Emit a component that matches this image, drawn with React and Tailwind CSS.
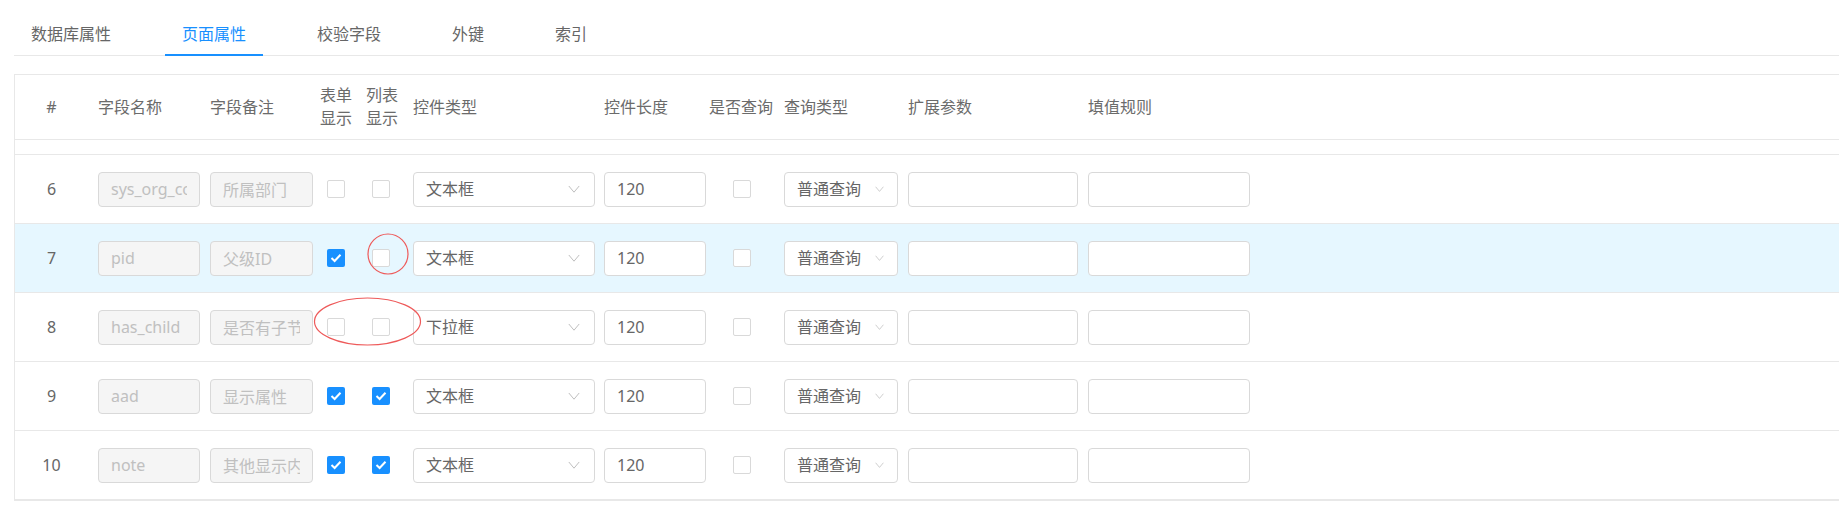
import React from 'react';

const tabs = ['数据库属性', '页面属性', '校验字段', '外键', '索引'];

const rows = [
  { no: 6,  name: 'sys_org_code', remark: '所属部门',     form: false, list: false, type: '文本框' },
  { no: 7,  name: 'pid',          remark: '父级ID',       form: true,  list: false, type: '文本框', hover: true },
  { no: 8,  name: 'has_child',    remark: '是否有子节点', form: false, list: false, type: '下拉框' },
  { no: 9,  name: 'aad',          remark: '显示属性',     form: true,  list: true,  type: '文本框' },
  { no: 10, name: 'note',         remark: '其他显示内容', form: true,  list: true,  type: '文本框' },
];

const cols = 'grid grid-cols-[83px_112px_110px_46px_47px_191px_105px_75px_124px_180px_1fr]';

const Checkbox = ({ checked, className = '' }) => (
  checked ? (
    <span className={`flex h-[18px] w-[18px] items-center justify-center rounded-[2px] bg-[#1890ff] ${className}`}>
      <svg width="12" height="10" viewBox="0 0 12 10" fill="none">
        <path d="M1.5 5 L4.6 8 L10.5 1.8" stroke="#fff" strokeWidth="2" />
      </svg>
    </span>
  ) : (
    <span className={`block h-[18px] w-[18px] rounded-[2px] border border-[#d9d9d9] bg-white ${className}`} />
  )
);

const Chevron = ({ size = 12 }) => (
  <svg width={size} height={size * 0.7} viewBox="0 0 12 8" fill="none">
    <path d="M0.8 0.8 L6 7 L11.2 0.8" stroke="#bfbfbf" strokeWidth="1" />
  </svg>
);

const TextInput = ({ value = '', disabled, width }) => (
  <input
    readOnly
    value={value}
    className={`h-[35px] ${width} rounded-[4px] border border-[#d9d9d9] px-[12px] text-[16px] outline-none ${
      disabled ? 'bg-[#f5f5f5] text-[#c0c0c0]' : 'bg-white text-[#666666]'
    }`}
  />
);

const Select = ({ value, width, pr, chevron }) => (
  <div className={`flex h-[35px] ${width} items-center justify-between rounded-[4px] border border-[#d9d9d9] bg-white pl-[12px] ${pr} text-[16px] text-[#666666]`}>
    <span className="whitespace-nowrap">{value}</span>
    <Chevron size={chevron} />
  </div>
);

export default function App() {
  return (
    <div className="relative min-h-[510px] overflow-hidden bg-white pl-[14px] pt-[14px] font-['Noto_Sans','Noto_Sans_CJK_SC',sans-serif] text-[#666666]">
      {/* tabs */}
      <div className="flex border-b border-[#e8e8e8]">
        {tabs.map((t, i) => (
          <div
            key={t}
            className={`-mb-px mr-[37px] flex h-[42px] items-center border-b-2 px-[17px] text-[16px] ${
              i === 1 ? 'border-[#1890ff] text-[#1890ff]' : 'border-transparent text-[#666666]'
            }`}
          >
            {t}
          </div>
        ))}
      </div>

      {/* table */}
      <div className="mt-[18px] border-b border-l border-t border-[#e8e8e8]">
        <div className={`${cols} h-[65px] items-center border-b border-[#e8e8e8] text-[16px] text-[#6b6b6b]`}>
          <div className="pr-[10px] text-center">#</div>
          <div>字段名称</div>
          <div>字段备注</div>
          <div className="leading-[23px]">表单<br />显示</div>
          <div className="leading-[23px]">列表<br />显示</div>
          <div>控件类型</div>
          <div>控件长度</div>
          <div>是否查询</div>
          <div>查询类型</div>
          <div>扩展参数</div>
          <div>填值规则</div>
        </div>

        {/* tail of the scrolled-out row 5 */}
        <div className="h-[15px] border-b border-[#e8e8e8]" />

        {rows.map(r => (
          <div
            key={r.no}
            className={`${cols} h-[69px] items-center border-b border-[#e8e8e8] text-[16px] ${r.hover ? 'bg-[#e6f7ff]' : 'bg-white'}`}
          >
            <div className="pr-[10px] text-center text-[#666666]">{r.no}</div>
            <div><TextInput value={r.name} disabled width="w-[102px]" /></div>
            <div><TextInput value={r.remark} disabled width="w-[103px]" /></div>
            <div><Checkbox checked={r.form} className="ml-[7px]" /></div>
            <div><Checkbox checked={r.list} className="ml-[6px]" /></div>
            <div><Select value={r.type} width="w-[182px]" pr="pr-[14px]" chevron={12} /></div>
            <div><TextInput value="120" width="w-[102px]" /></div>
            <div><Checkbox checked={false} className="ml-[24px]" /></div>
            <div><Select value="普通查询" width="w-[114px]" pr="pr-[13px]" chevron={9} /></div>
            <div><TextInput width="w-[170px]" /></div>
            <div><TextInput width="w-[162px]" /></div>
          </div>
        ))}
      </div>

      {/* red annotation marks */}
      <svg className="pointer-events-none absolute left-[367px] top-[233px]" width="42" height="42" viewBox="0 0 42 42" fill="none">
        <ellipse cx="21" cy="21" rx="20" ry="20" stroke="#ee5a5a" strokeWidth="1.2" />
      </svg>
      <svg className="pointer-events-none absolute left-[313px] top-[297px]" width="109" height="50" viewBox="0 0 109 50" fill="none">
        <ellipse cx="54.5" cy="24.5" rx="53" ry="23.5" stroke="#ee5a5a" strokeWidth="1.2" />
      </svg>
    </div>
  );
}
